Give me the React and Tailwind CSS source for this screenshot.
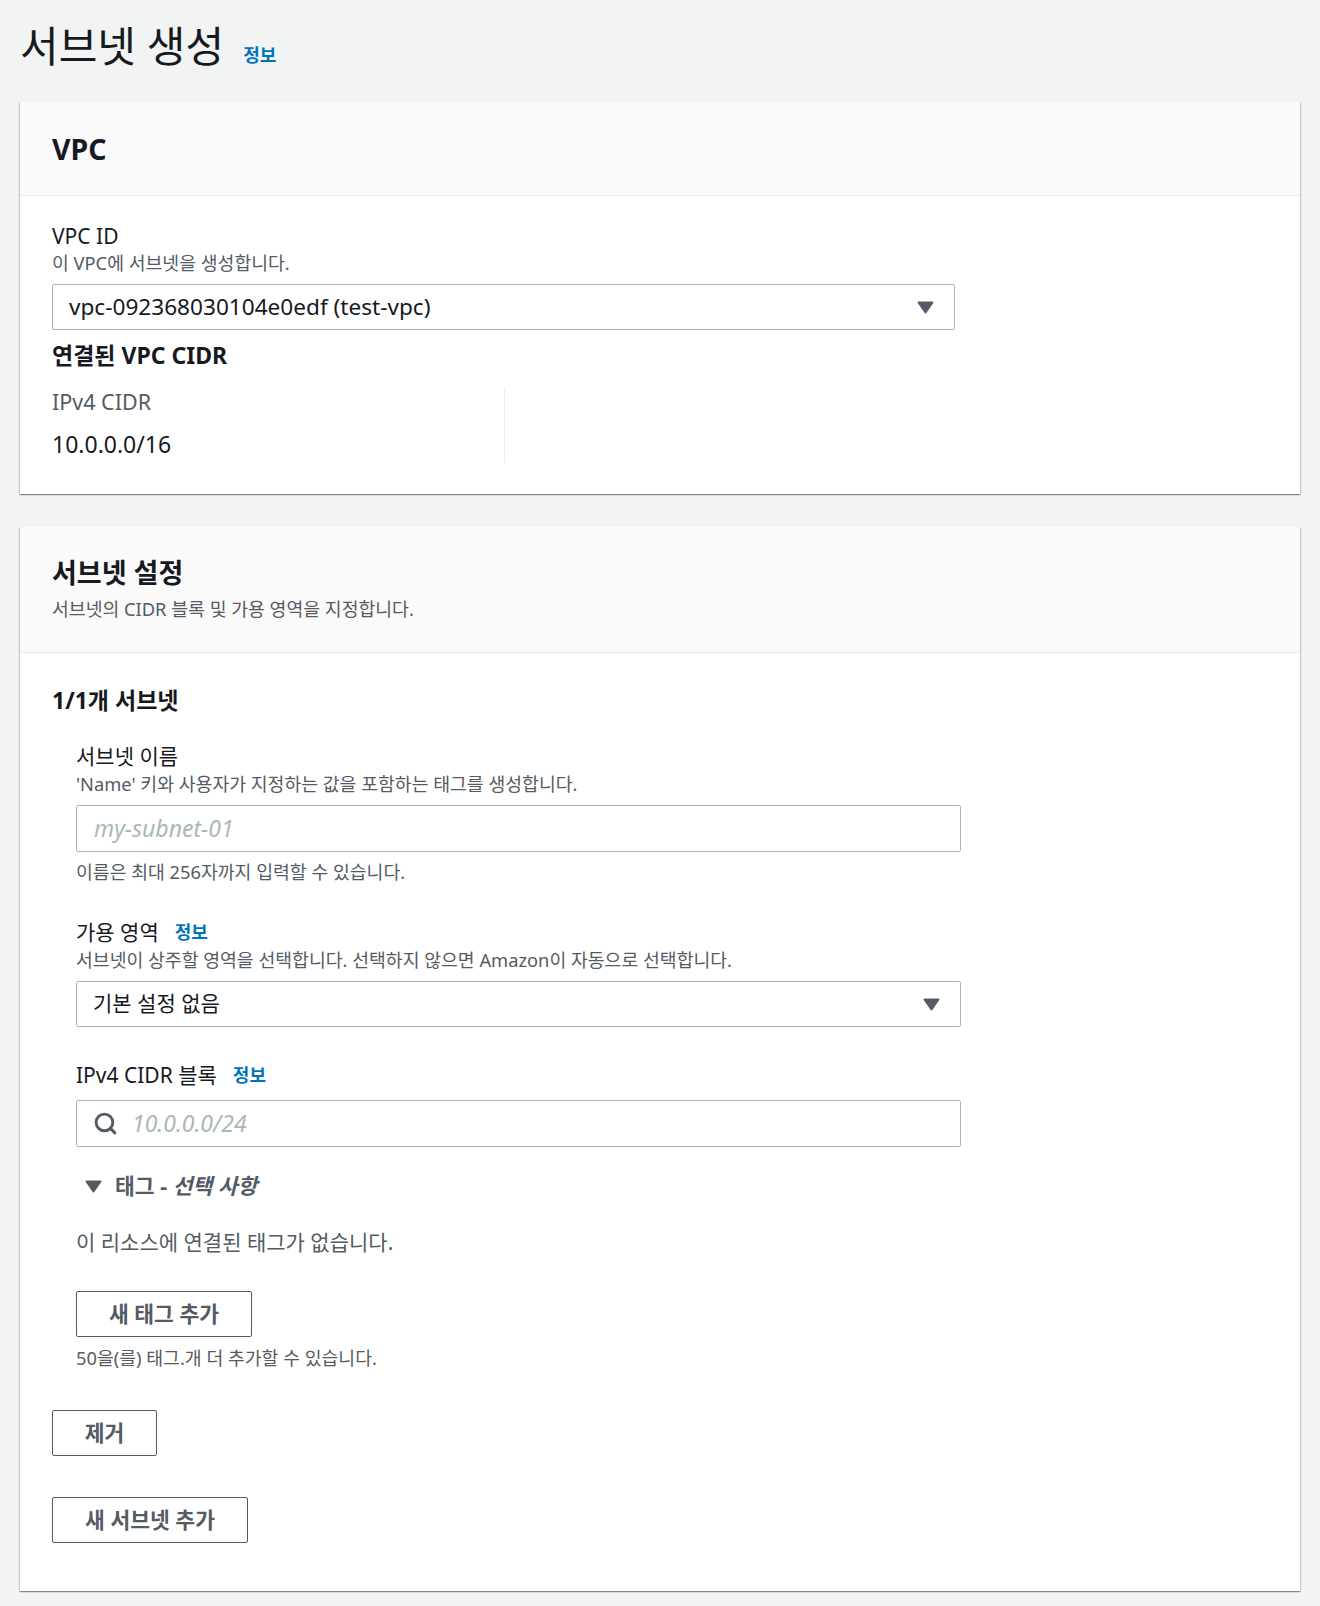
import { Search } from 'lucide-react';

function Caret({ className = '' }) {
  return (
    <svg width="17" height="13" viewBox="0 0 17 13" className={className}>
      <path d="M1.5 1.5 L15.5 1.5 L8.5 11.5 Z" fill="#545b64" stroke="#545b64" strokeWidth="2" strokeLinejoin="round" />
    </svg>
  );
}

function Info({ className = '' }) {
  return <span className={'text-[18px] font-bold text-[#0073bb] ' + className}>정보</span>;
}

function Label({ children, info }) {
  return (
    <div className="flex items-center text-[21px] leading-[28px] text-[#16191f]">
      <span>{children}</span>
      {info && <Info className="ml-[16px] leading-[28px]" />}
    </div>
  );
}

function Desc({ children, className = '' }) {
  return <div className={'text-[18.3px] leading-[24px] text-[#545b64] ' + className}>{children}</div>;
}

function SelectBox({ value, className = '', textClass = 'text-[22.6px]' }) {
  return (
    <div className={'flex h-[46px] items-center justify-between rounded-[2px] border border-[#aab7b8] bg-white pl-[16px] pr-[20px] ' + className}>
      <span className={textClass + ' text-[#16191f]'}>{value}</span>
      <Caret />
    </div>
  );
}

function OutlineButton({ children, className = '' }) {
  return (
    <button className={'flex h-[46px] items-center justify-center rounded-[2px] border border-[#545b64] bg-white text-[21.5px] font-bold text-[#545b64] ' + className}>
      {children}
    </button>
  );
}

function Card({ children, className = '' }) {
  return (
    <div className={'bg-white shadow-[0_1px_1px_0_rgba(0,28,36,0.3),1px_1px_1px_0_rgba(0,28,36,0.15),-1px_1px_1px_0_rgba(0,28,36,0.15)] ' + className}>
      {children}
    </div>
  );
}

export default function App() {
  return (
    <div className="min-h-[1606px] bg-[#f2f3f3] px-[20px] pt-[22px] pb-[16px] font-['Noto_Sans','Noto_Sans_CJK_KR',sans-serif]">
      <div className="flex items-baseline">
        <h1 className="text-[42px] leading-[48px] font-normal text-[#16191f]">서브넷 생성</h1>
        <Info className="ml-[19px]" />
      </div>

      <Card className="mt-[32px]">
        <div className="border-b border-[#eaeded] bg-[#fafafa] px-[32px] pt-[29px] pb-[28px]">
          <h2 className="text-[28.5px] leading-[36px] font-bold text-[#16191f]">VPC</h2>
        </div>
        <div className="px-[32px] pt-[26px] pb-[31px]">
          <Label>VPC ID</Label>
          <Desc className="mt-[1px]">이 VPC에 서브넷을 생성합니다.</Desc>
          <SelectBox className="mt-[9px] w-[903px]" value="vpc-092368030104e0edf (test-vpc)" />
          <h3 className="mt-[10px] text-[23px] leading-[30px] font-bold text-[#16191f]">연결된 VPC CIDR</h3>
          <div className="mt-[17px] flex">
            <div className="w-[452px] pt-[1px] pb-[5px]">
              <div className="text-[21.5px] leading-[28px] text-[#545b64]">IPv4 CIDR</div>
              <div className="mt-[14px] text-[23px] leading-[28px] text-[#16191f]">10.0.0.0/16</div>
            </div>
            <div className="border-l border-[#eaeded]" />
          </div>
        </div>
      </Card>

      <Card className="mt-[33px]">
        <div className="border-b border-[#eaeded] bg-[#fafafa] px-[32px] pt-[28px] pb-[31px]">
          <h2 className="text-[27px] leading-[36px] font-bold text-[#16191f]">서브넷 설정</h2>
          <Desc className="mt-[6px]">서브넷의 CIDR 블록 및 가용 영역을 지정합니다.</Desc>
        </div>
        <div className="px-[32px] pt-[32px] pb-[48px]">
          <h3 className="text-[23px] leading-[30px] font-bold text-[#16191f]">1/1개 서브넷</h3>

          <div className="pl-[24px]">
            <div className="mt-[27px]">
              <Label>서브넷 이름</Label>
              <Desc className="mt-[2px]">'Name' 키와 사용자가 지정하는 값을 포함하는 태그를 생성합니다.</Desc>
              <div className="mt-[9px] flex h-[47px] w-[885px] items-center rounded-[2px] border border-[#aab7b8] bg-white pl-[17px]">
                <span className="text-[23px] italic text-[#aab7b8]">my-subnet-01</span>
              </div>
              <Desc className="mt-[8px]">이름은 최대 256자까지 입력할 수 있습니다.</Desc>
            </div>

            <div className="mt-[34px]">
              <Label info>가용 영역</Label>
              <Desc className="mt-[2px]">서브넷이 상주할 영역을 선택합니다. 선택하지 않으면 Amazon이 자동으로 선택합니다.</Desc>
              <SelectBox className="mt-[9px] w-[885px]" textClass="text-[21px]" value="기본 설정 없음" />
            </div>

            <div className="mt-[34px]">
              <Label info>IPv4 CIDR 블록</Label>
              <div className="mt-[11px] flex h-[47px] w-[885px] items-center rounded-[2px] border border-[#aab7b8] bg-white pl-[16px]">
                <Search size={25} strokeWidth={2.8} className="text-[#545b64]" />
                <span className="ml-[14px] text-[23px] italic text-[#aab7b8]">10.0.0.0/24</span>
              </div>
            </div>

            <div className="mt-[24px] flex items-center pl-[9px] text-[21.5px] leading-[30px] font-bold text-[#545b64]">
              <Caret />
              <span className="ml-[13px]">태그 - <i>선택 사항</i></span>
            </div>

            <div className="mt-[27px] text-[21px] leading-[28px] text-[#545b64]">이 리소스에 연결된 태그가 없습니다.</div>

            <OutlineButton className="mt-[35px] w-[176px]">새 태그 추가</OutlineButton>
            <Desc className="mt-[9px]">50을(를) 태그.개 더 추가할 수 있습니다.</Desc>
          </div>

          <OutlineButton className="mt-[40px] w-[105px]">제거</OutlineButton>
          <OutlineButton className="mt-[41px] w-[196px]">새 서브넷 추가</OutlineButton>
        </div>
      </Card>
    </div>
  );
}
